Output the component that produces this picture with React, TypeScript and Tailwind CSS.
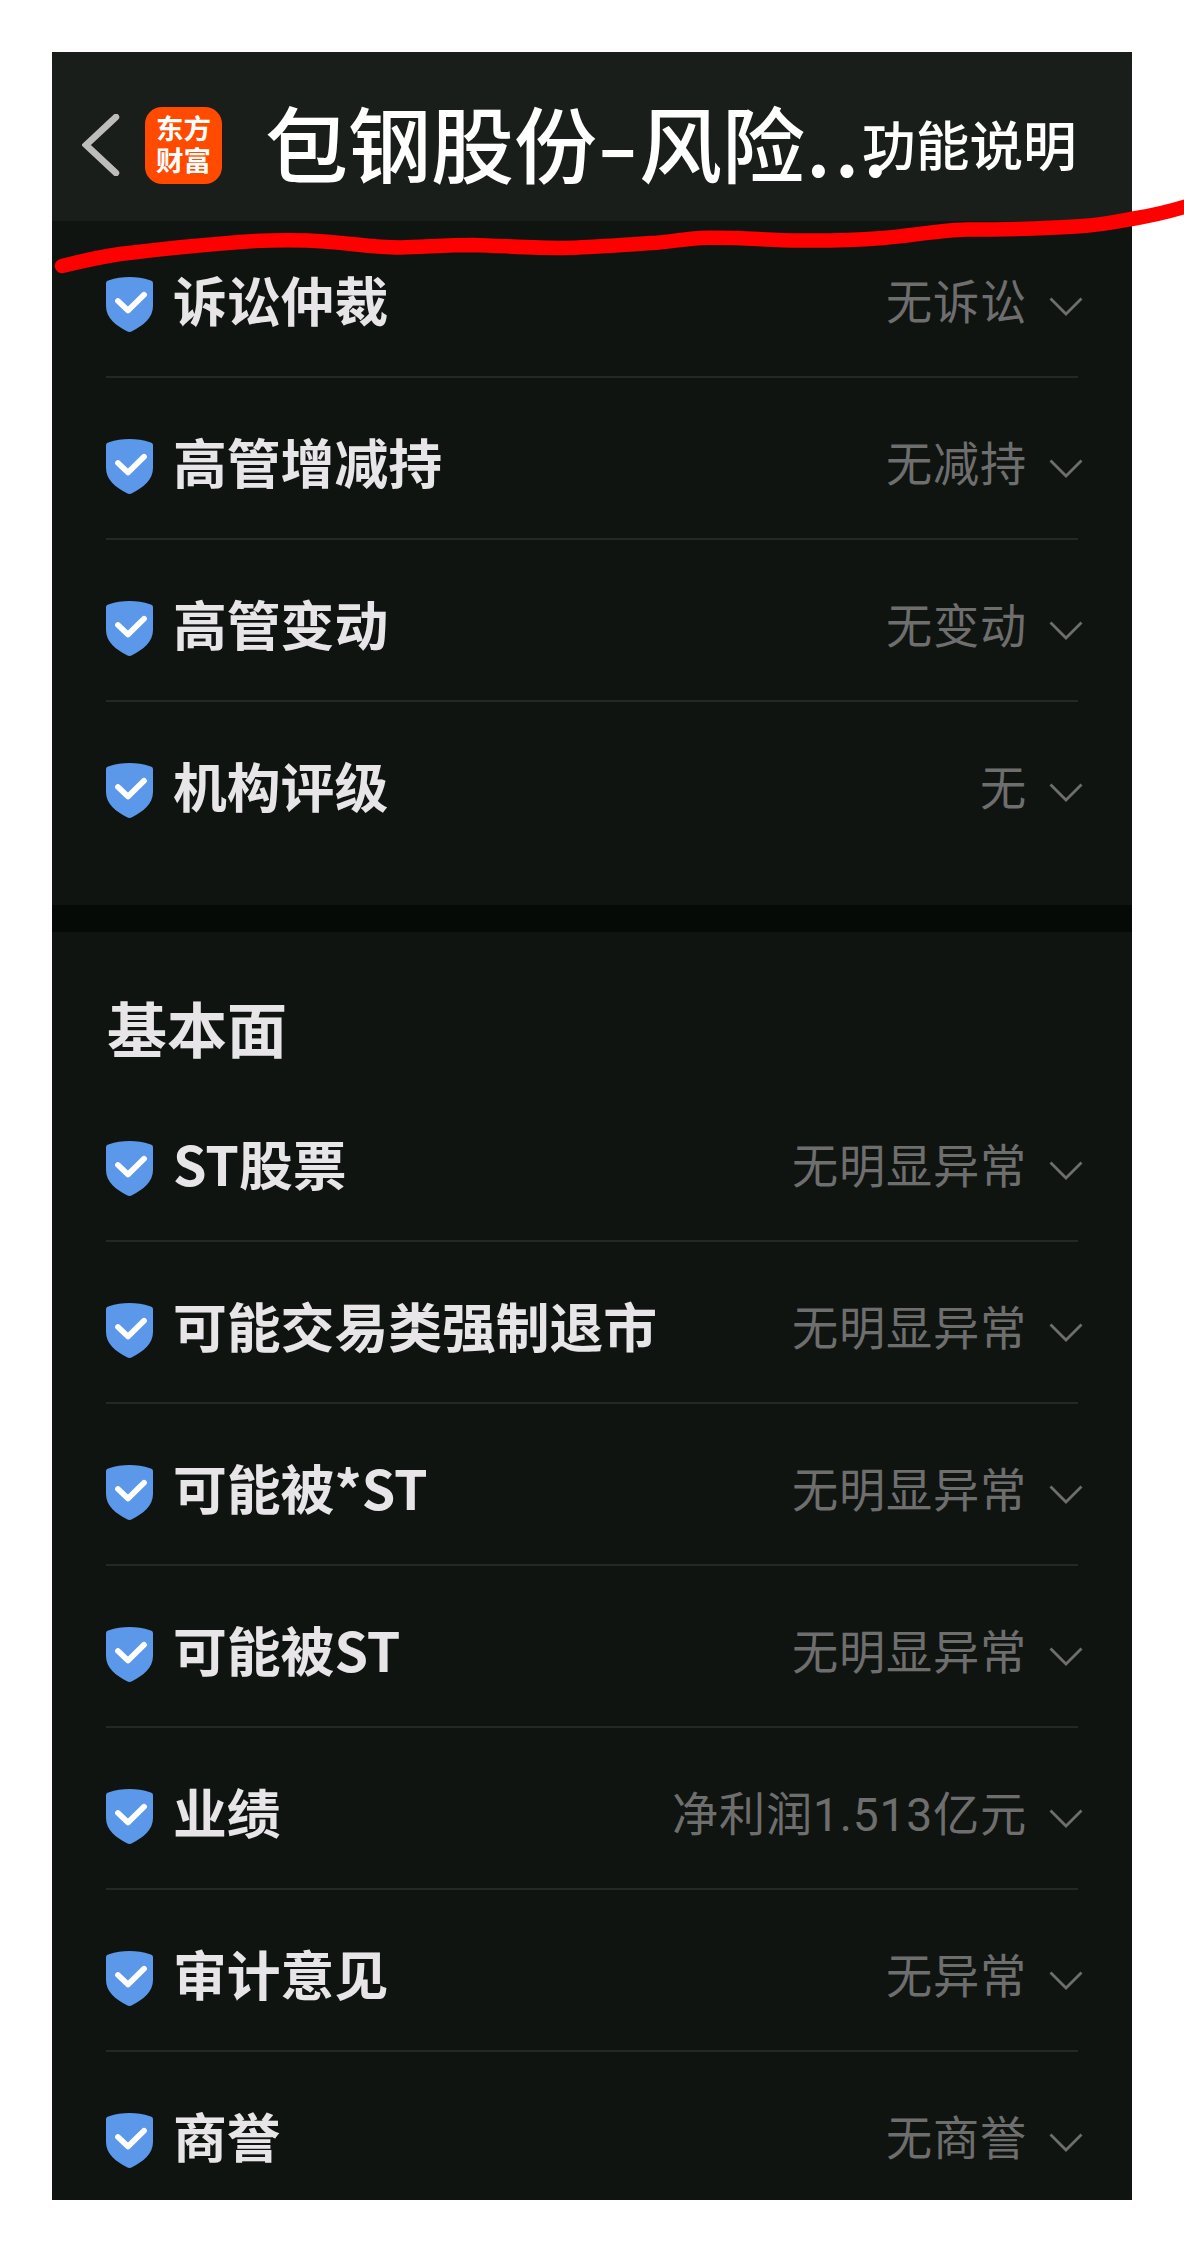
interface RiskItem {
    label: string;
    value: string;
}

const eventItems: RiskItem[] = [
    { label: "诉讼仲裁", value: "无诉讼" },
    { label: "高管增减持", value: "无减持" },
    { label: "高管变动", value: "无变动" },
    { label: "机构评级", value: "无" },
];

const fundamentalItems: RiskItem[] = [
    { label: "ST股票", value: "无明显异常" },
    { label: "可能交易类强制退市", value: "无明显异常" },
    { label: "可能被*ST", value: "无明显异常" },
    { label: "可能被ST", value: "无明显异常" },
    { label: "业绩", value: "净利润1.513亿元" },
    { label: "审计意见", value: "无异常" },
    { label: "商誉", value: "无商誉" },
];

function ShieldIcon({ className }: { className?: string }) {
    return (
        <svg className={className} viewBox="0 0 47 55" fill="none">
            <path
                d="M0 6.5C0 4.6 1 3.9 3 3.3C16 -1.1 31 -1.1 44 3.3C46 3.9 47 4.6 47 6.5V29C47 41 37 48.5 26 54.2C24.3 55.2 22.7 55.2 21 54.2C10 48.5 0 41 0 29Z"
                fill="#5b98ea"
            />
            <path
                d="M12 24L22 33.5L38 17.8"
                stroke="#fff"
                strokeWidth="5.8"
                strokeLinecap="round"
                strokeLinejoin="round"
            />
        </svg>
    );
}

function RiskRow({ label, value }: RiskItem) {
    return (
        <div className="flex h-[162px] items-center border-b-2 border-[#252826] pt-[18px] last:border-transparent">
            <ShieldIcon className="mb-[2px] h-[55px] w-[47px] shrink-0" />
            <span className="ml-[20px] whitespace-nowrap pb-[12px] text-[53.8px] leading-[60px] font-bold text-[#e7e5e7]">
                {label}
            </span>
            <span className="ml-auto whitespace-nowrap pb-[4px] font-[Roboto,'Noto_Sans_CJK_SC',sans-serif] text-[46.2px] leading-[60px] tracking-[0.8px] text-[#6e6e6e]">
                {value}
            </span>
            <svg className="-mr-[5px] ml-[22px] mt-[4px] h-[20px] w-[34px] shrink-0" viewBox="0 0 34 20" fill="none">
                <path d="M1.5 1.5L17 17L32.5 1.5" stroke="#6e6e6e" strokeWidth="2.8" />
            </svg>
        </div>
    );
}

function Header() {
    return (
        <header className="flex h-[169px] items-center bg-[#1a1e1b] pt-[17px] pl-[30px] text-white">
            <svg className="h-[62px] w-[38px] shrink-0" viewBox="0 0 38 62" fill="none">
                <path d="M34 3L4 31L34 59" stroke="#bdbdbd" strokeWidth="6.5" strokeLinecap="round" />
            </svg>
            <div className="ml-[25px] flex h-[77px] w-[77px] shrink-0 flex-col items-center justify-center rounded-[17px] bg-[#ff4a00] pb-[5px] text-[27.5px] leading-[32px] font-bold">
                <span>东方</span>
                <span>财富</span>
            </div>
            <h1 className="ml-[43px] flex w-[597px] shrink-0 whitespace-nowrap pb-[8px] text-[83px] leading-[100px] font-medium">
                <span className="w-[332px] shrink-0">包钢股份</span>
                <span className="flex w-[42px] shrink-0 justify-center">
                    <span className="inline-block scale-x-[1.4]">-</span>
                </span>
                <span className="w-[167px] shrink-0">风险</span>
                <span className="shrink-0 tracking-[3.8px]">...</span>
            </h1>
            <a className="shrink-0 whitespace-nowrap pb-[4px] text-[53.7px] leading-[70px] font-medium">功能说明</a>
        </header>
    );
}

export default function App() {
    return (
        <div className="relative h-[2252px] w-[1184px] overflow-hidden bg-white p-[52px] font-['Noto_Sans_CJK_SC',sans-serif]">
            <main className="h-[2148px] w-[1080px] overflow-hidden bg-[#101411]">
                <Header />
                <section className="-mt-[5px] h-[689px] px-[54px]">
                    {eventItems.map((item) => (
                        <RiskRow key={item.label} {...item} />
                    ))}
                </section>
                <div className="h-[27px] bg-[#060a07]" />
                <section className="px-[54px]">
                    <h2 className="h-[148px] pt-[60px] pl-[1px] text-[60px] leading-[70px] font-bold text-[#e7e5e7]">
                        基本面
                    </h2>
                    {fundamentalItems.map((item) => (
                        <RiskRow key={item.label} {...item} />
                    ))}
                </section>
            </main>

            {/* red marker stroke under the title bar */}
            <svg
                className="pointer-events-none absolute top-0 left-0 h-[300px] w-[1184px]"
                viewBox="0 0 1184 300"
                fill="none"
            >
                <path
                    d="M62 266C82 261 100 257 120 254C160 249 200 245 240 242C265 240 285 240 307 240.5C345 242 370 247.5 400 247.5C425 247 445 245 473 245C505 246 535 248 563 248C595 247.5 625 244.5 657 242.7C675 241 690 238 708 237.7C745 237 765 240.5 800 240.5C830 241 855 240 883 238C910 236 940 230 967 229.5C1005 229.5 1045 228.5 1083 226C1105 224.5 1120 221 1137 218C1155 215 1172 211 1194 204"
                    stroke="#ff0000"
                    strokeWidth="14.5"
                    strokeLinecap="round"
                    strokeLinejoin="round"
                />
            </svg>
        </div>
    );
}
